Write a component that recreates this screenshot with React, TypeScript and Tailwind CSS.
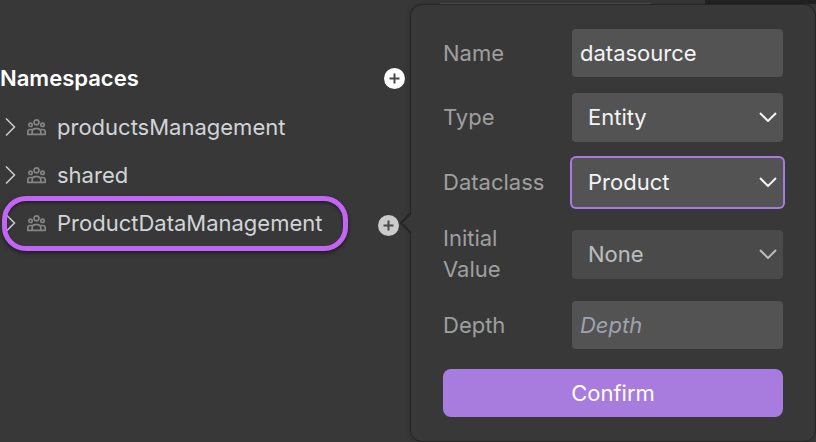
import { useId, type ReactNode } from "react";

function PeopleIcon() {
  return (
    <svg viewBox="0 0 20 18" className="h-[18px] w-5 shrink-0" fill="none" stroke="#858585" strokeWidth="1.7" strokeLinejoin="round" aria-hidden="true">
      <circle cx="10.500" cy="4.300" r="2.500" />
      <circle cx="4.500" cy="6.800" r="1.700" />
      <circle cx="16.500" cy="6.800" r="1.700" />
      <path d="M6.200 16.400v-2.600a3.200 3.200 0 0 1 3.200-3.200h2.200a3.200 3.200 0 0 1 3.200 3.200v2.600z" />
      <path d="M6.600 11.500H4.200A2.400 2.400 0 0 0 1.800 13.900v2.500h4.400M14.400 11.500h2.400a2.400 2.400 0 0 1 2.400 2.400v2.500h-4.400" />
    </svg>
  );
}

function AddButton({ label, tone }: { label: string; tone: string }) {
  return (
    <button type="button" aria-label={label} className={`flex size-[21px] shrink-0 items-center justify-center rounded-full ${tone}`}>
      <svg viewBox="0 0 11 11" className="size-[11px]" stroke="#4a4a4a" strokeWidth="2" aria-hidden="true">
        <path d="M5.500 .5v10M.5 5.500h10" />
      </svg>
    </button>
  );
}

function Namespace({ name, selected = false }: { name: string; selected?: boolean }) {
  return (
    <li className="relative flex h-12 items-center pl-[5px] text-[#d2d4d8]">
      <svg viewBox="0 0 11 18" className="h-[18px] w-[11px] shrink-0" fill="none" stroke="#d2d4d8" strokeWidth="1.4" aria-hidden="true">
        <path d="M1 .5l8.500 8.500L1 17.500" />
      </svg>
      <div className="ml-[10px] flex flex-1 items-center gap-[11px]">
        <PeopleIcon />
        <span>{name}</span>
      </div>
      {selected && (
        <>
          <span className="absolute top-[-3px] left-[2px] h-[55px] w-[346px] rounded-[24px] border-[5px] border-[#c264f5] shadow-[0_2px_4px_rgba(0,0,0,0.5),inset_0_2px_3px_rgba(0,0,0,0.4)]" />
          <div className="mr-[11px] pt-1">
            <AddButton label={`Add to ${name}`} tone="bg-[#cbcbcb]" />
          </div>
        </>
      )}
    </li>
  );
}

function Field({ label, children }: { label: string; children: (id: string) => ReactNode }) {
  const id = useId();
  return (
    <div className="flex items-center">
      <label htmlFor={id} className="w-[129px] shrink-0 pr-5 leading-[31px] text-[#9f9f9f]">
        {label}
      </label>
      {children(id)}
    </div>
  );
}

function Select({ id, value, focused = false, disabled = false }: { id: string; value: string; focused?: boolean; disabled?: boolean }) {
  return (
    <div className={`relative min-w-0 flex-1 ${disabled ? "opacity-70" : ""}`}>
      <select
        id={id}
        disabled={disabled}
        defaultValue={value}
        className={`block h-[49px] w-full appearance-none rounded bg-[#535353] pr-10 pl-4 text-[#f3f4f6] outline-none disabled:opacity-100 ${focused ? "ring-2 ring-[#a87bdf]" : ""}`}
      >
        <option>{value}</option>
      </select>
      <svg viewBox="0 0 18 10" className="pointer-events-none absolute top-[19px] right-[6px] h-[10px] w-[18px]" fill="none" stroke="#f3f4f6" strokeWidth="2" aria-hidden="true">
        <path d="M1 1l8 8 8-8" />
      </svg>
    </div>
  );
}

export default function App() {
  return (
    <main className="flex min-h-screen bg-[#383838] font-['Inter',sans-serif] text-[22px] font-normal">
      <section className="min-w-0 flex-1 pt-[54px]">
        <header className="flex h-[49px] items-center justify-between pr-[5px]">
          <h2 className="font-semibold text-white">Namespaces</h2>
          <AddButton label="Add namespace" tone="bg-white" />
        </header>
        <ul>
          <Namespace name="productsManagement" />
          <Namespace name="shared" />
          <Namespace name="ProductDataManagement" selected />
        </ul>
      </section>

      <aside className="flex w-[406px] shrink-0 flex-col bg-[#383838]">
        <div className="flex h-1 items-end">
          <div className="ml-[30px] h-px w-[211px] bg-[#555555]" />
          <div className="ml-[54px] h-full flex-1 bg-[#222222]" />
        </div>
        <form
          className="relative flex flex-col gap-4 rounded-[12px] border border-[#252525] bg-[#383838] px-8 py-6 shadow-[0_0_6px_rgba(0,0,0,0.2)]"
          onSubmit={(event) => event.preventDefault()}
        >
          <svg viewBox="0 0 12 22" className="absolute top-[207px] left-[-11px] h-[22px] w-3" aria-hidden="true">
            <path d="M12 0L1 11l11 11z" fill="#383838" />
            <path d="M11 1L1 11l10 10" fill="none" stroke="#252525" strokeWidth="2" />
          </svg>
          <Field label="Name">
            {(id) => <input id={id} type="text" defaultValue="datasource" className="h-12 min-w-0 flex-1 rounded bg-[#535353] px-2 text-[#f3f4f6] outline-none" />}
          </Field>
          <Field label="Type">{(id) => <Select id={id} value="Entity" />}</Field>
          <Field label="Dataclass">{(id) => <Select id={id} value="Product" focused />}</Field>
          <Field label="Initial Value">{(id) => <Select id={id} value="None" disabled />}</Field>
          <Field label="Depth">
            {(id) => <input id={id} type="text" placeholder="Depth" className="h-12 min-w-0 flex-1 rounded bg-[#535353] px-2 text-[#f3f4f6] outline-none placeholder:text-[#9ca3af] placeholder:italic" />}
          </Field>
          <button type="submit" className="mt-1 h-12 rounded-lg bg-[#a87bdf] text-white">
            Confirm
          </button>
        </form>
      </aside>
    </main>
  );
}
